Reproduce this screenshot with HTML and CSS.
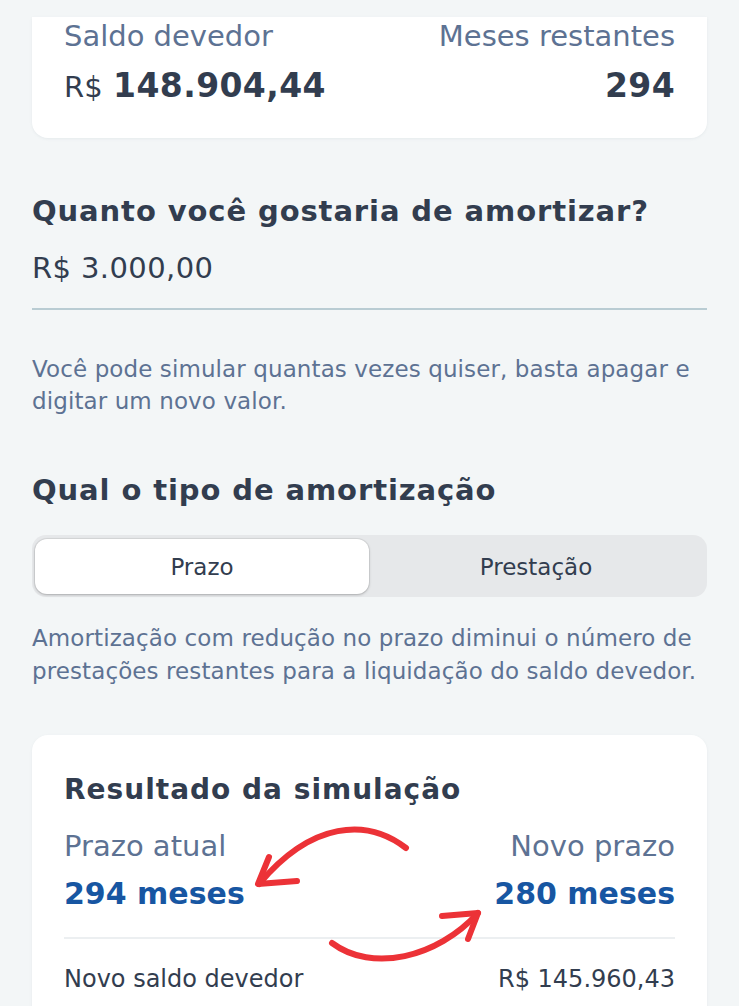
FILE: index.html
```html
<!DOCTYPE html>
<html lang="pt-BR">
<head>
<meta charset="utf-8">
<title>Amortização</title>
<link rel="stylesheet" href="styles.css">
</head>
<body>
<div class="page">
  <section class="card card-top">
    <div class="row labels">
      <span class="label">Saldo devedor</span>
      <span class="label">Meses restantes</span>
    </div>
    <div class="row values">
      <span class="value"><span class="cur">R$</span> <strong>148.904,44</strong></span>
      <span class="value"><strong>294</strong></span>
    </div>
  </section>

  <h2 class="title t1">Quanto você gostaria de amortizar?</h2>
  <div class="input">R$ 3.000,00</div>
  <p class="help h1">Você pode simular quantas vezes quiser, basta apagar e digitar um novo valor.</p>

  <h2 class="title t2">Qual o tipo de amortização</h2>
  <div class="segment">
    <div class="seg active">Prazo</div>
    <div class="seg">Prestação</div>
  </div>
  <p class="help h2">Amortização com redução no prazo diminui o número de prestações restantes para a liquidação do saldo devedor.</p>

  <section class="card card-result">
    <h3 class="rtitle">Resultado da simulação</h3>
    <div class="row labels2">
      <span class="label">Prazo atual</span>
      <span class="label">Novo prazo</span>
    </div>
    <div class="row values2">
      <span class="blue">294 meses</span>
      <span class="blue">280 meses</span>
    </div>
    <div class="divider"></div>
    <div class="row detail">
      <span>Novo saldo devedor</span>
      <span>R$ 145.960,43</span>
    </div>
    <svg class="arrows" width="675" height="271" viewBox="0 0 675 271" fill="none" stroke="#ec3237" stroke-width="6" stroke-linecap="round" stroke-linejoin="round">
      <path d="M374 112 C 335 82 280 85 227 148"/>
      <path d="M237 121 L 226 148 L 265 145"/>
      <path d="M300 207 C 340 237 405 222 446 177"/>
      <path d="M410 180 L 446 177 L 436 203"/>
    </svg>
  </section>
</div>
</body>
</html>
```
FILE: styles.css
```css
html, body {
  margin: 0;
  padding: 0;
}
body {
  background: #f3f6f7;
  font-family: "DejaVu Sans", Lato, sans-serif;
  color: #323d4f;
  width: 739px;
  height: 1006px;
  overflow: hidden;
}
.page {
  padding: 17px 32px 0;
}
.card {
  background: #ffffff;
  box-shadow: 0 1px 3px rgba(120, 140, 150, 0.10);
}
.card-top {
  border-radius: 0 0 16px 16px;
  height: 121px;
  padding: 0 32px;
  box-sizing: border-box;
}
.row {
  display: flex;
  justify-content: space-between;
  align-items: baseline;
}
.label {
  color: #5d7293;
  font-size: 29px;
  line-height: 36px;
}
.labels {
  padding-top: 1px;
}
.values {
  margin-top: 12px;
}
.value {
  font-size: 33px;
  line-height: 40px;
}
.cur {
  font-size: 29px;
}
.value strong {
  font-weight: 700;
  letter-spacing: 0.4px;
}
.title {
  margin: 0;
  font-weight: 700;
  font-size: 29px;
  line-height: 36px;
  letter-spacing: 0.9px;
}
.t1 {
  margin-top: 55px;
}
.input {
  font-size: 29px;
  line-height: 36px;
  letter-spacing: 0.4px;
  margin-top: 21px;
  padding-bottom: 22px;
  border-bottom: 2px solid #b9ccd3;
}
.help {
  margin: 0;
  color: #5d7293;
  font-size: 23px;
  line-height: 32px;
  letter-spacing: 0.1px;
}
.h1 {
  margin-top: 43px;
}
.t2 {
  margin-top: 55px;
}
.segment {
  margin-top: 27px;
  background: #e6e8ea;
  border-radius: 14px;
  height: 62px;
  display: flex;
  padding: 4px 4px 3px 3px;
  box-sizing: border-box;
}
.seg {
  flex: 1;
  display: flex;
  align-items: center;
  justify-content: center;
  font-size: 23px;
  color: #323d4f;
  border-radius: 12px;
}
.seg.active {
  background: #ffffff;
  box-shadow: 0 1px 3px rgba(0, 0, 0, 0.22), 0 0 0 1px rgba(0, 0, 0, 0.06);
}
.h2 {
  margin-top: 25px;
  line-height: 33px;
}
.card-result {
  position: relative;
  margin-top: 47px;
  border-radius: 16px 16px 0 0;
  padding: 37px 32px 0;
  height: 300px;
  box-sizing: border-box;
}
.rtitle {
  margin: 0;
  font-weight: 700;
  font-size: 28px;
  line-height: 36px;
  letter-spacing: 1px;
}
.labels2 {
  margin-top: 20px;
}
.values2 {
  margin-top: 10px;
}
.blue {
  color: #1756a2;
  font-weight: 700;
  font-size: 30px;
  line-height: 40px;
}
.divider {
  margin-top: 23px;
  height: 2px;
  background: #eceff1;
}
.detail {
  margin-top: 25px;
  font-size: 24px;
  line-height: 30px;
}
.arrows {
  position: absolute;
  left: 0;
  top: 1px;
  pointer-events: none;
}
```
